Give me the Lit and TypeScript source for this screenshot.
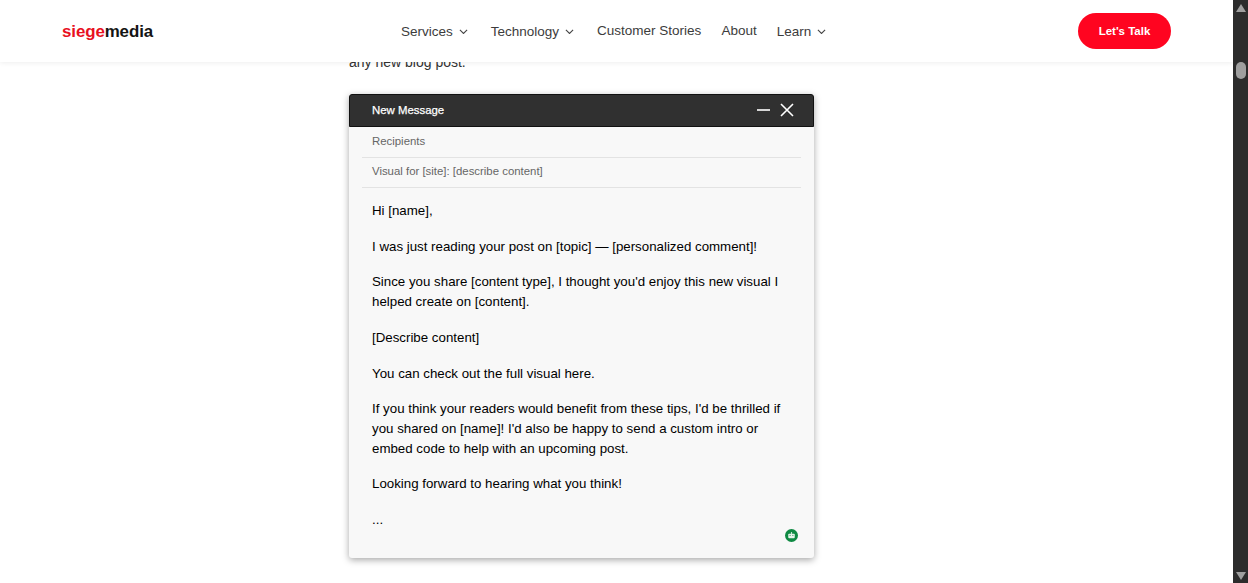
import { LitElement, html, css } from 'lit';
import { customElement } from 'lit/decorators.js';

const chevron = html`<svg class="chev" viewBox="0 0 10 6" width="9" height="5.4" fill="none" stroke="currentColor" stroke-width="1.2"><path d="M1 1l4 4 4-4"/></svg>`;

@customElement('app-root')
export class AppRoot extends LitElement {
  static styles = css`
    :host {
      display: flex;
      height: 583px;
      overflow: hidden;
      font-family: "Liberation Sans", Arial, sans-serif;
      color: #111;
      background: #fff;
    }
    .page {
      position: relative;
      flex: 1;
      min-width: 0;
      overflow: hidden;
    }
    .topbar {
      position: absolute;
      top: 0;
      left: 0;
      right: 0;
      height: 62px;
      box-sizing: border-box;
      padding: 0 62px;
      display: flex;
      align-items: center;
      background: #fff;
      box-shadow: 0 1px 5px rgba(0, 0, 0, 0.07);
      z-index: 2;
    }
    .logo {
      width: 339px;
      padding-top: 2px;
      font-size: 16.9px;
      font-weight: 700;
      letter-spacing: -0.1px;
      color: #141414;
    }
    .logo span { color: #e8101f; }
    nav {
      display: flex;
      align-items: center;
      font-size: 13.5px;
      color: #3c3c3c;
    }
    .item {
      display: flex;
      align-items: center;
      gap: 6px;
      margin-right: 20px;
      white-space: nowrap;
    }
    .item.plain { margin-bottom: 1px; }
    .chev { color: #444; margin-top: 1px; margin-right: 3px; }
    .cta {
      margin-left: auto;
      width: 93px;
      height: 36px;
      border-radius: 18px;
      background: #ff0420;
      color: #fff;
      font-size: 11.5px;
      font-weight: 700;
      display: flex;
      align-items: center;
      justify-content: center;
    }
    .article {
      padding: 52px 0 0 349px;
      width: 465px;
    }
    .lead {
      margin: 0 0 22px;
      font-size: 14px;
      line-height: 20px;
      color: #333;
    }
    .mail {
      width: 465px;
      height: 464px;
      box-sizing: border-box;
      background: #f8f8f8;
      border-radius: 3px;
      box-shadow: 0 2px 7px rgba(0, 0, 0, 0.35);
      position: relative;
    }
    .mail-head {
      height: 33px;
      box-sizing: border-box;
      padding: 0 14px 2px 22px;
      display: flex;
      align-items: center;
      background: #303030;
      border: 1px solid #111;
      border-radius: 3px 3px 0 0;
      color: #fff;
      font-size: 11.4px;
      -webkit-text-stroke: 0.25px #fff;
    }
    .mail-head svg { margin-left: auto; }
    .field {
      margin: 0 13px;
      padding: 0 0 3px 10px;
      height: 30px;
      box-sizing: border-box;
      display: flex;
      align-items: center;
      border-bottom: 1px solid #e3e3e3;
      font-size: 11.4px;
      color: #666;
    }
    .field.first { height: 31px; padding-bottom: 2px; }
    .body {
      padding: 13px 23px 0;
      font-size: 13.3px;
      line-height: 19.7px;
      color: #000;
    }
    .body p { margin: 0 0 16px; }
    .badge {
      position: absolute;
      right: 16px;
      bottom: 16px;
    }
    .scrollbar {
      width: 15px;
      flex: none;
      background: #2c2c2c;
      display: flex;
      flex-direction: column;
      align-items: center;
      padding: 4px 0 3px;
      box-sizing: border-box;
    }
    .thumb {
      width: 10px;
      height: 17px;
      border-radius: 5px;
      background: #9f9f9f;
      margin-top: 50px;
    }
    .spacer { flex: 1; }
  `;

  render() {
    return html`
      <div class="page">
        <header class="topbar">
          <div class="logo"><span>siege</span>media</div>
          <nav>
            <div class="item">Services ${chevron}</div>
            <div class="item">Technology ${chevron}</div>
            <div class="item plain">Customer Stories</div>
            <div class="item plain">About</div>
            <div class="item">Learn ${chevron}</div>
          </nav>
          <div class="cta">Let's Talk</div>
        </header>
        <div class="article">
          <p class="lead">any new blog post.</p>
          <div class="mail">
            <div class="mail-head">
              New Message
              <svg viewBox="0 0 42 14" width="42" height="14" fill="none" stroke="#fff" stroke-width="1.6">
                <path d="M0 7h13"/>
                <path d="M24 1l12 12M36 1L24 13"/>
              </svg>
            </div>
            <div class="field first">Recipients</div>
            <div class="field">Visual for [site]: [describe content]</div>
            <div class="body">
              <p>Hi [name],</p>
              <p>I was just reading your post on [topic] — [personalized comment]!</p>
              <p>Since you share [content type], I thought you'd enjoy this new visual I helped create on [content].</p>
              <p>[Describe content]</p>
              <p>You can check out the full visual here.</p>
              <p>If you think your readers would benefit from these tips, I'd be thrilled if you shared on [name]! I'd also be happy to send a custom intro or embed code to help with an upcoming post.</p>
              <p>Looking forward to hearing what you think!</p>
              <p>...</p>
            </div>
            <svg class="badge" viewBox="0 0 14 14" width="13" height="13">
              <circle cx="7" cy="7" r="7" fill="#0f8a43"/>
              <rect x="3.5" y="5" width="7" height="5" rx="1" fill="#e8f5ec"/>
              <rect x="6.4" y="3.4" width="1.2" height="1.8" fill="#e8f5ec"/>
              <rect x="5" y="6.4" width="1" height="1" fill="#0f8a43"/>
              <rect x="8" y="6.4" width="1" height="1" fill="#0f8a43"/>
            </svg>
          </div>
        </div>
      </div>
      <div class="scrollbar">
        <svg viewBox="0 0 10 8" width="10" height="8"><path d="M5 0l5 8H0z" fill="#9f9f9f"/></svg>
        <div class="thumb"></div>
        <div class="spacer"></div>
        <svg viewBox="0 0 10 8" width="10" height="8"><path d="M0 0h10L5 8z" fill="#9f9f9f"/></svg>
      </div>
    `;
  }
}
